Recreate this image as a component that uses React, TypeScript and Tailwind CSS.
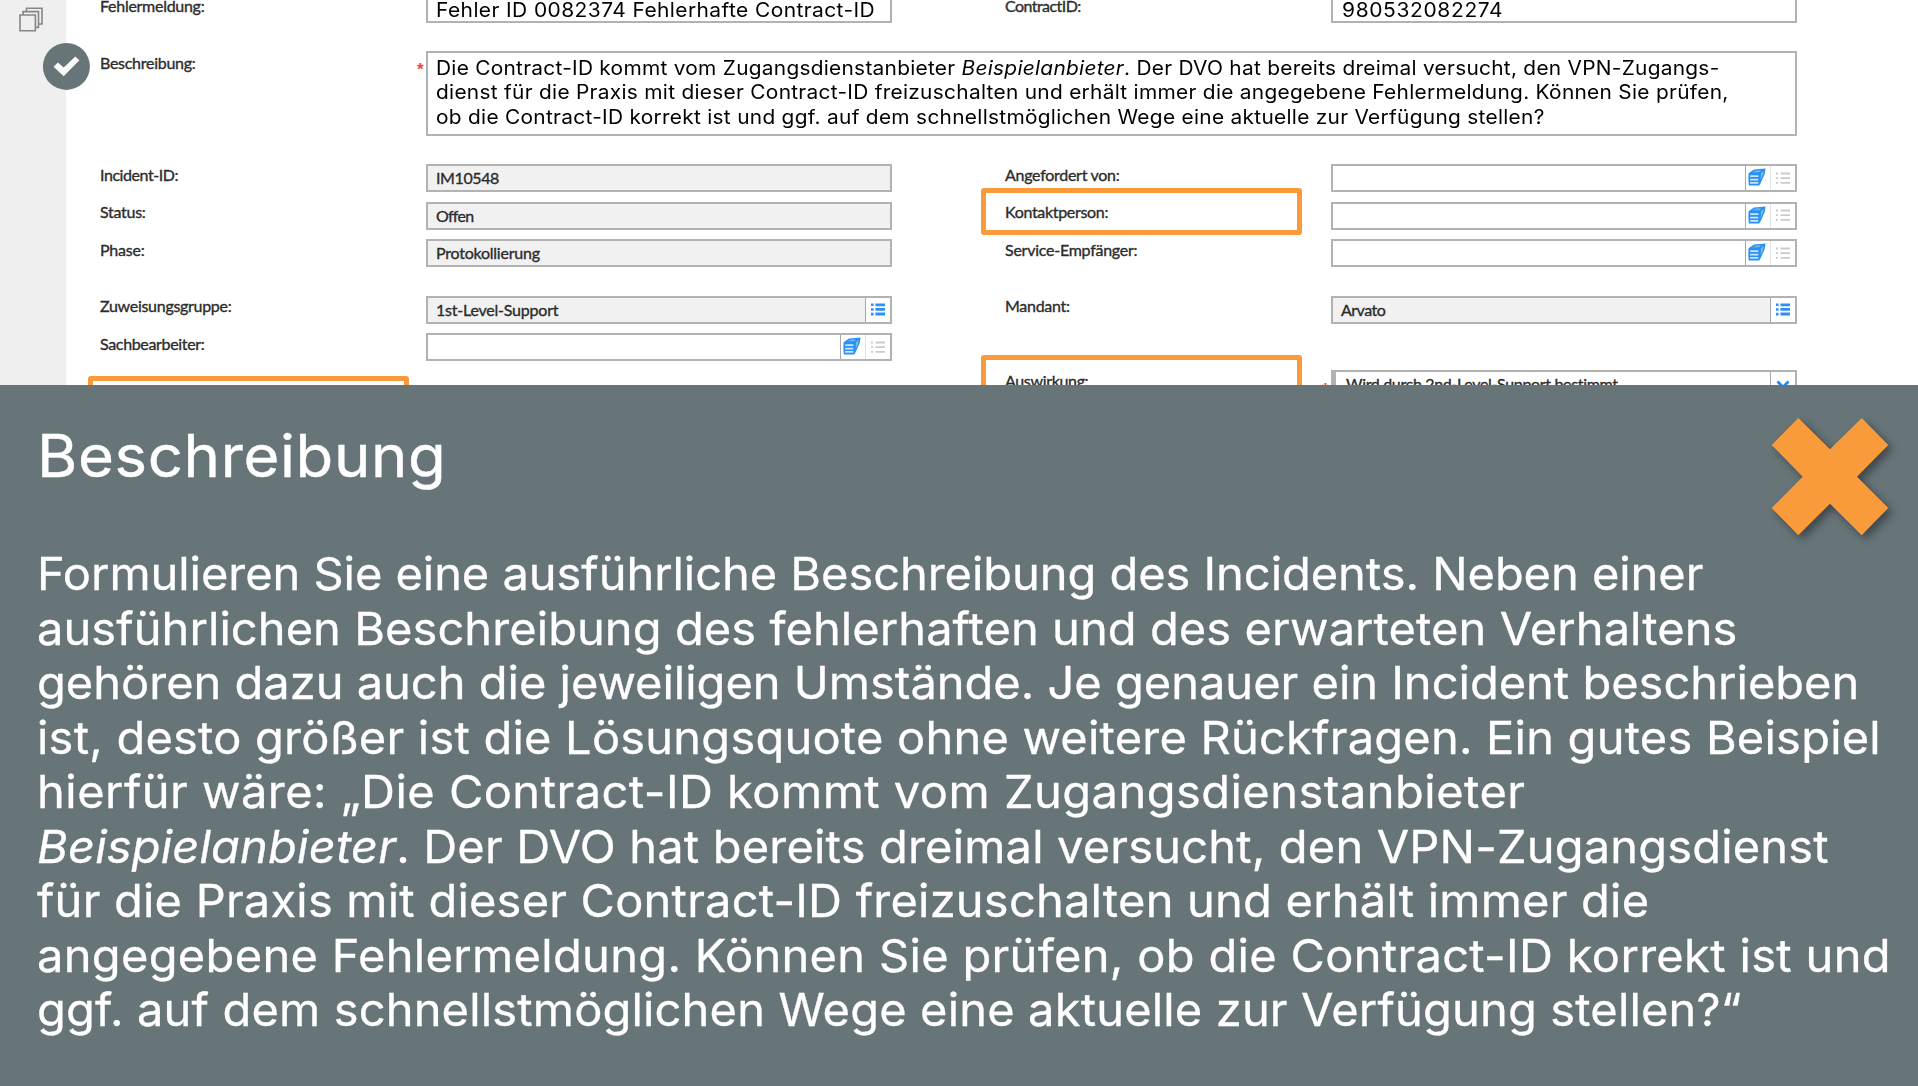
import type { ReactNode } from "react";

const LABEL =
  "font-['Lato',sans-serif] text-[16px] leading-5 text-[#2c2c2c] whitespace-nowrap [-webkit-text-stroke:0.35px_#2c2c2c]";
const BODY = "font-['Inter',sans-serif] whitespace-nowrap text-black";
const WIDE = "origin-left scale-x-[1.06]";

function ListIcon({ active }: { active?: boolean }) {
  return active ? (
    <svg width="14" height="13" viewBox="0 0 14 13" fill="#2f8ff5">
      <path d="M0 .4h2.6v2.6H0zM4.4 .4H14v2.8H4.4zM0 5.2h2.6v2.6H0zM4.4 5H14v2.8H4.4zM0 9.8h2.6v2.6H0zM4.4 9.6H14v2.8H4.4z" />
    </svg>
  ) : (
    <svg width="14" height="13" viewBox="0 0 14 13" fill="#cbcbcb">
      <path d="M0 .6h2v1.8H0zM4.6 .6H14v1.8H4.6zM0 5.3h2v1.8H0zM4.6 5.3H14v1.8H4.6zM0 10h2v1.8H0zM4.6 10H14v1.8H4.6z" />
    </svg>
  );
}

function RecordsIcon() {
  return (
    <svg className="mr-[2px] mb-[2px] shrink-0" width="18" height="18" viewBox="0 0 18 18">
      <path d="M.6 5.2 6 1.6 17.6.4l-.8 5.4-4.2 9.400-1.400 2.400L.8 17.400Q0 11 .6 5.200Z" fill="#2b90f4" />
      <path d="M13 5.600 15.200 3l.4 1.800-3 7.400z" fill="#7fc0d8" />
      <path d="M4.400 4.200 8 2.600l5-.4-1.600 2z" fill="#6fb6fa" />
      <path d="M2.200 7.300h8.200v1.800H2.200zM2.100 10.800h8.200v1.700H2.100zM2.100 14.100h8.200v1.700H2.100z" fill="#c9e4ff" />
    </svg>
  );
}

function Cell({ children, light }: { children: ReactNode; light?: boolean }) {
  return (
    <span
      className={
        light
          ? "flex w-[25px] shrink-0 items-center justify-center border-l border-[#e2e2e2] bg-white"
          : "flex w-[25px] shrink-0 items-center justify-center border-l-[1.5px] border-[#a8a8a8] bg-white"
      }
    >
      {children}
    </span>
  );
}

type FieldKind = "plain" | "readonly" | "list" | "lookup";

function Field({ kind, value, tracking = "" }: { kind: FieldKind; value?: string; tracking?: string }) {
  const gray = kind === "readonly" || kind === "list";
  return (
    <div className="flex h-7 w-[466px] border-2 border-[#b2b2b2]">
      <span className={`flex-1 pt-[2px] pl-[8px] ${gray ? "bg-[#f1f1f1]" : "bg-white"} ${LABEL} ${tracking}`}>
        {value}
      </span>
      {kind === "lookup" && (
        <>
          <Cell>
            <RecordsIcon />
          </Cell>
          <Cell light>
            <ListIcon />
          </Cell>
        </>
      )}
      {kind === "list" && (
        <Cell>
          <ListIcon active />
        </Cell>
      )}
    </div>
  );
}

function Label({ text, tracking, mark }: { text: string; tracking: string; mark?: ReactNode }) {
  return (
    <div className="relative pt-[0.5px]">
      {mark}
      <span className={`relative block ${LABEL} ${tracking}`}>{text}</span>
    </div>
  );
}

function Required() {
  return (
    <span className="absolute top-[9px] left-[317px] font-['Liberation_Sans',sans-serif] text-[17px] leading-5 font-bold text-[#ff3b3b]">
      *
    </span>
  );
}

const ROW = "grid grid-cols-[326px_466px_113px_326px_466px]";

export default function App() {
  return (
    <div className="flex h-[1086px] w-[1918px] flex-col overflow-hidden bg-white">
      <div className="relative flex h-[385px] shrink-0 overflow-hidden">
        <aside className="w-[66px] shrink-0 bg-[#efefef] pt-[7px] pl-[19px]">
          <svg width="25" height="25" viewBox="0 0 25 25" fill="#efefef" stroke="#868686" strokeWidth="1.6">
            <path d="M7.500 1.200H23V17H7.500z" />
            <path d="M4 4.600H19.500V20.400H4z" />
            <path d="M1 8H16.400V23.800H1z" />
          </svg>
        </aside>

        <main className="flex-1 pl-[34px]">
          <div className={`${ROW} -mt-[5px] h-7`}>
            <Label text="Fehlermeldung:" tracking="tracking-[-0.28px]" />
            <div className="h-7 border-2 border-[#b2b2b2] pt-px pl-[8px]">
              <div className={`text-[19.800px] leading-6 tracking-[0.38px] ${BODY} ${WIDE}`}>
                Fehler ID 0082374 Fehlerhafte Contract-ID
              </div>
            </div>
            <span />
            <Label text="ContractID:" tracking="tracking-[-0.55px]" />
            <div className="h-7 border-2 border-[#b2b2b2] pt-px pl-[9px]">
              <div className={`text-[19.800px] leading-6 tracking-[0.6px] ${BODY} ${WIDE}`}>980532082274</div>
            </div>
          </div>

          <div className="mt-7 flex h-[84.5px]">
            <div className="relative w-[326px] pt-px">
              <Label text="Beschreibung:" tracking="tracking-[-0.28px]" />
              <Required />
            </div>
            <div className="w-[1371px] border-2 border-[#b2b2b2] pt-[2.5px] pl-[8px]">
              <div className={`text-[19.7px] leading-[24.6px] ${BODY} ${WIDE}`}>
                <div className="tracking-[0.25px]">
                  Die Contract-ID kommt vom Zugangsdienstanbieter <em>Beispielanbieter</em>. Der DVO hat bereits
                  dreimal versucht, den VPN-Zugangs-
                </div>
                <div className="tracking-[0.27px]">
                  dienst für die Praxis mit dieser Contract-ID freizuschalten und erhält immer die angegebene
                  Fehlermeldung. Können Sie prüfen,
                </div>
                <div className="tracking-[0.27px]">
                  ob die Contract-ID korrekt ist und ggf. auf dem schnellstmöglichen Wege eine aktuelle zur Verfügung
                  stellen?
                </div>
              </div>
            </div>
          </div>

          <div className={`${ROW} mt-[28.5px] h-[37.5px]`}>
            <Label text="Incident-ID:" tracking="tracking-[-0.44px]" />
            <Field kind="readonly" value="IM10548" tracking="tracking-[-0.4px]" />
            <span />
            <Label text="Angefordert von:" tracking="tracking-[-0.28px]" />
            <Field kind="lookup" />
          </div>
          <div className={`${ROW} h-[37.5px]`}>
            <Label text="Status:" tracking="tracking-[-0.28px]" />
            <Field kind="readonly" value="Offen" tracking="tracking-[-0.75px]" />
            <span />
            <Label
              text="Kontaktperson:"
              tracking="tracking-[-0.32px]"
              mark={
                <div className="absolute -top-[13.5px] -left-[24px] h-[47px] w-[321px] rounded-[3px] border-[5.5px] border-[#f99b3a]" />
              }
            />
            <Field kind="lookup" />
          </div>
          <div className={`${ROW} h-[37.5px]`}>
            <Label text="Phase:" tracking="tracking-[-0.22px]" />
            <Field kind="readonly" value="Protokollierung" tracking="tracking-[-0.23px]" />
            <span />
            <Label text="Service-Empfänger:" tracking="tracking-[-0.25px]" />
            <Field kind="lookup" />
          </div>

          <div className={`${ROW} mt-[19px] h-[37.5px]`}>
            <Label text="Zuweisungsgruppe:" tracking="tracking-[-0.29px]" />
            <Field kind="list" value="1st-Level-Support" tracking="tracking-[-0.22px]" />
            <span />
            <Label text="Mandant:" tracking="tracking-[-0.28px]" />
            <Field kind="list" value="Arvato" tracking="tracking-[-0.5px]" />
          </div>
          <div className={`${ROW} h-[37.5px]`}>
            <Label text="Sachbearbeiter:" tracking="tracking-[-0.34px]" />
            <Field kind="lookup" />
          </div>
          <div className={`${ROW} h-[37.5px]`}>
            <div className="relative">
              <div className="absolute top-[5px] -left-[12px] h-[47px] w-[321px] rounded-[3px] border-[5.5px] border-[#f99b3a]" />
            </div>
            <span />
            <span />
            <div className="relative">
              <Label
                text="Auswirkung:"
                tracking="tracking-[-0.34px]"
                mark={
                  <div className="absolute -top-[15.5px] -left-[24px] h-[47px] w-[321px] rounded-[3px] border-[5.5px] border-[#f99b3a]" />
                }
              />
              <Required />
            </div>
            <div className="-mt-[0.5px] flex h-7 border-2 border-l-[5px] border-[#b2b2b2]">
              <span className={`flex-1 pt-[2px] pl-[10px] tracking-[-0.34px] ${LABEL}`}>
                Wird durch 2nd-Level-Support bestimmt
              </span>
              <Cell>
                <svg width="14" height="9" viewBox="0 0 14 9" fill="none" stroke="#1e88f0" strokeWidth="2.8">
                  <path d="M1.500 1.500 7 7l5.500-5.500" />
                </svg>
              </Cell>
            </div>
          </div>
        </main>

        <svg className="absolute top-[42px] left-[42px]" width="49" height="49" viewBox="0 0 49 49">
          <circle cx="24.400" cy="24.400" r="23.500" fill="#677478" />
          <path d="m11.500 24.700 4.400-4.100 5.800 5 11.600-11 4.100 3.700-15.700 16z" fill="#fafafa" />
        </svg>
      </div>

      <section className="flex-1 bg-[#677478] pt-[33px] pl-[37px] text-white">
        <header className="flex h-[129px] items-start justify-between pr-[23px]">
          <h1 className="origin-left scale-x-[1.045] font-['Inter',sans-serif] text-[59px] leading-[76px] font-normal tracking-[0.6px] [-webkit-text-stroke:0.4px_white]">
            Beschreibung
          </h1>
          <button className="h-[128px] w-[128px]" aria-label="Schließen">
            <svg
              className="overflow-visible drop-shadow-[4px_4px_4px_rgba(0,0,0,0.4)]"
              width="128"
              height="128"
              viewBox="0 0 128 128"
            >
              <path
                d="M31.300 0 63 31.300 94.700 0l26.600 27L90 58.700l31.300 31.300-26.600 27.300L63 85.700l-31.700 31.600L4.700 90l31-31.300L4.700 27z"
                fill="#f99b3a"
              />
            </svg>
          </button>
        </header>
        <div className="origin-left scale-x-[1.045] font-['Inter',sans-serif] text-[45px] leading-[54.5px] whitespace-nowrap [-webkit-text-stroke:0.3px_white]">
          <div className="tracking-[-0.05px]">Formulieren Sie eine ausführliche Beschreibung des Incidents. Neben einer</div>
          <div className="tracking-[0.06px]">ausführlichen Beschreibung des fehlerhaften und des erwarteten Verhaltens</div>
          <div className="tracking-[-0.01px]">gehören dazu auch die jeweiligen Umstände. Je genauer ein Incident beschrieben</div>
          <div className="tracking-[0.2px]">ist, desto größer ist die Lösungsquote ohne weitere Rückfragen. Ein gutes Beispiel</div>
          <div className="tracking-[0.45px]">hierfür wäre: „Die Contract-ID kommt vom Zugangsdienstanbieter</div>
          <div className="tracking-[0.16px]">
            <em>Beispielanbieter</em>. Der DVO hat bereits dreimal versucht, den VPN-Zugangsdienst
          </div>
          <div className="tracking-[0.2px]">für die Praxis mit dieser Contract-ID freizuschalten und erhält immer die</div>
          <div className="tracking-[0.3px]">angegebene Fehlermeldung. Können Sie prüfen, ob die Contract-ID korrekt ist und</div>
          <div className="tracking-[0.15px]">ggf. auf dem schnellstmöglichen Wege eine aktuelle zur Verfügung stellen?“</div>
        </div>
      </section>
    </div>
  );
}
